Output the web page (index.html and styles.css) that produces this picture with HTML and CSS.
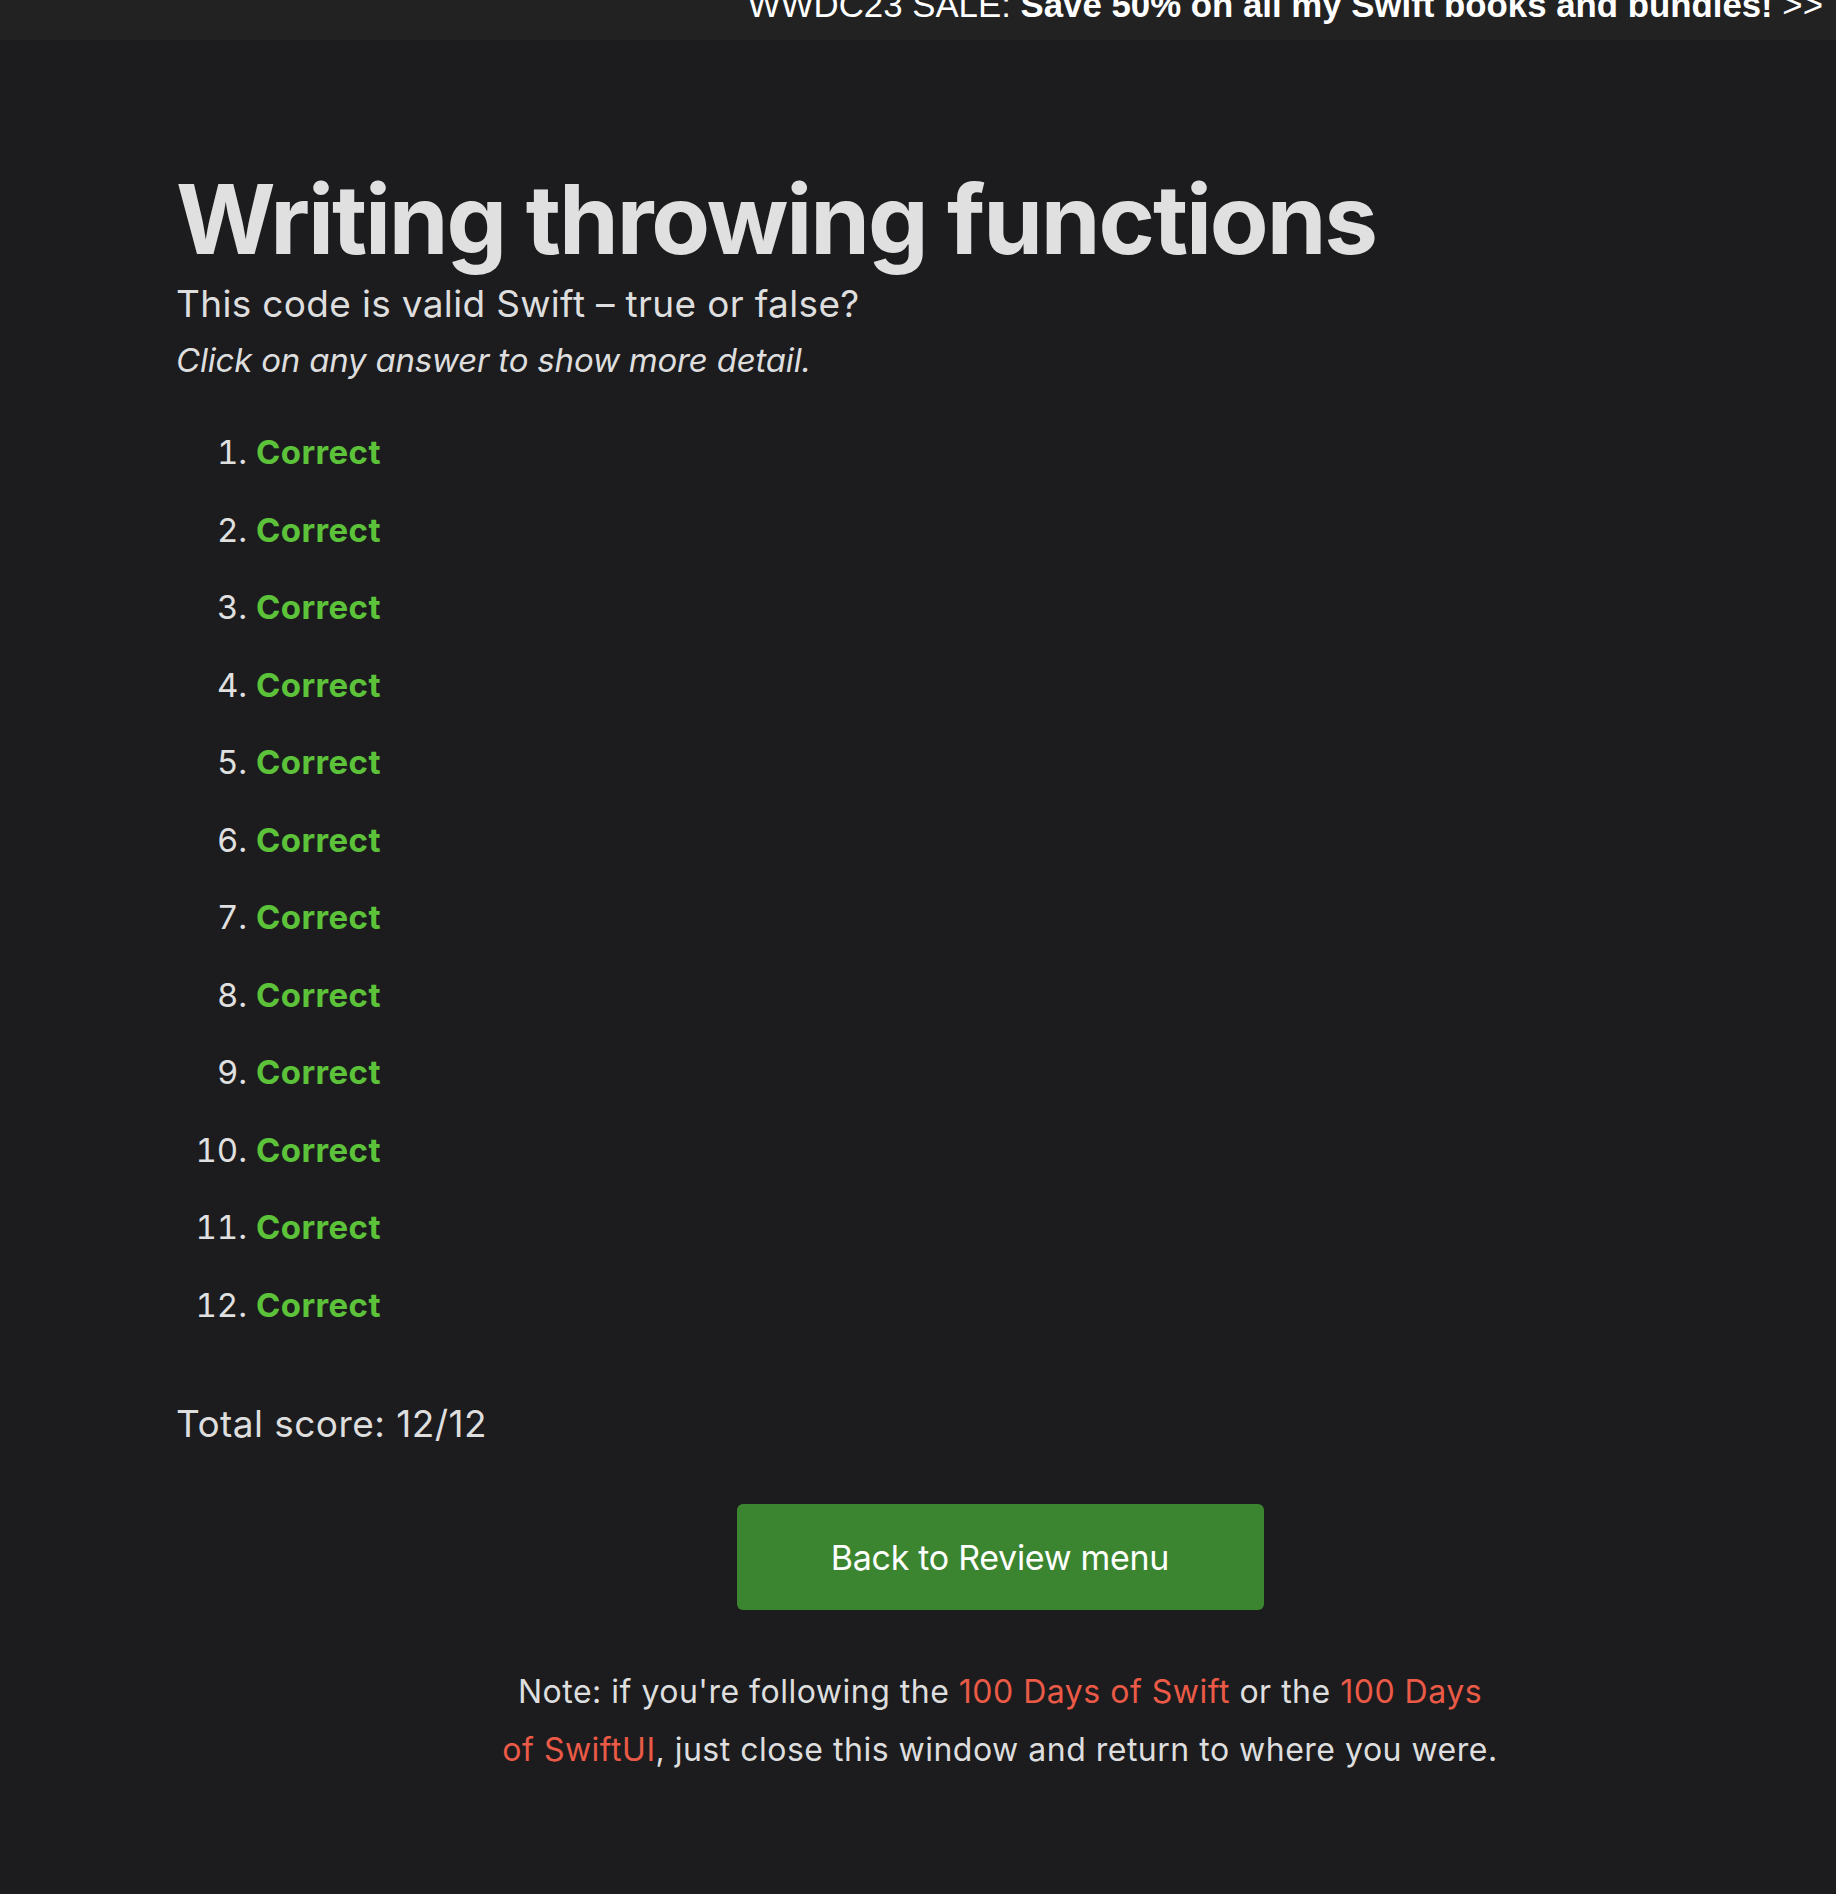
FILE: index.html
```html
<!DOCTYPE html>
<html lang="en">
<head>
<meta charset="utf-8">
<title>Writing throwing functions</title>
<link rel="stylesheet" href="styles.css">
</head>
<body>
<div class="banner"><a class="banner-link" href="#">WWDC23 SALE: <strong>Save 50% on all my Swift books and bundles!</strong> &gt;&gt;</a></div>
<main class="page">
  <h1 class="title">Writing throwing functions</h1>
  <p class="question">This code is valid Swift – true or false?</p>
  <p class="hint">Click on any answer to show more detail.</p>
  <ol class="answers">
    <li><span class="correct">Correct</span></li>
    <li><span class="correct">Correct</span></li>
    <li><span class="correct">Correct</span></li>
    <li><span class="correct">Correct</span></li>
    <li><span class="correct">Correct</span></li>
    <li><span class="correct">Correct</span></li>
    <li><span class="correct">Correct</span></li>
    <li><span class="correct">Correct</span></li>
    <li><span class="correct">Correct</span></li>
    <li><span class="correct">Correct</span></li>
    <li><span class="correct">Correct</span></li>
    <li><span class="correct">Correct</span></li>
  </ol>
  <p class="score">Total score: 12/12</p>
  <a class="back-button" href="#">Back to Review menu</a>
  <p class="note">Note: if you're following the <a href="#">100 Days of Swift</a> or the <a href="#">100 Days<br>of SwiftUI</a>, just close this window and return to where you were.</p>
</main>
</body>
</html>
```

FILE: styles.css
```css
html, body {
  margin: 0;
  padding: 0;
  background: #1c1c1e;
}

body {
  font-family: Inter, "Noto Sans", sans-serif;
  color: #dedede;
}

.banner {
  height: 40px;
  background: #222222;
  display: flex;
  justify-content: flex-end;
  padding-right: 13px;
  overflow: hidden;
}

.banner-link {
  font-family: "Liberation Sans", Arial, sans-serif;
  font-size: 34.8px;
  line-height: 10px;
  color: #ffffff;
  text-decoration: none;
  white-space: nowrap;
}

.page {
  padding: 122px 12px 120px 176px;
}

.title {
  margin: 0;
  font-size: 96px;
  line-height: 115px;
  font-weight: 700;
  color: #e0e0e0;
  letter-spacing: -2.1px;
}

.question {
  margin: 3px 0 0;
  font-size: 37px;
  line-height: 48px;
  letter-spacing: 0.33px;
}

.hint {
  margin: 10px 0 0;
  font-size: 33px;
  line-height: 44px;
  font-style: italic;
  letter-spacing: -0.2px;
}

.answers {
  margin: 32px 0 0;
  padding-left: 80px;
  font-size: 33px;
}

.answers li {
  line-height: 77.5px;
  color: #e0e0e0;
}

.correct {
  color: #5cc23a;
  font-weight: 700;
  letter-spacing: 0.4px;
}

.score {
  margin: 56px 0 0;
  font-size: 37px;
  line-height: 48px;
  letter-spacing: 0.45px;
}

.back-button {
  display: flex;
  align-items: center;
  justify-content: center;
  width: 527px;
  height: 106px;
  margin: 56px auto 0;
  background: #3c8530;
  border-radius: 6px;
  color: #ffffff;
  font-size: 34px;
  letter-spacing: -0.3px;
  text-decoration: none;
}

.note {
  margin: 53px 0 0;
  text-align: center;
  font-size: 32px;
  line-height: 58px;
  letter-spacing: 0.5px;
}

.note a {
  color: #ea5a47;
  text-decoration: none;
}
```
